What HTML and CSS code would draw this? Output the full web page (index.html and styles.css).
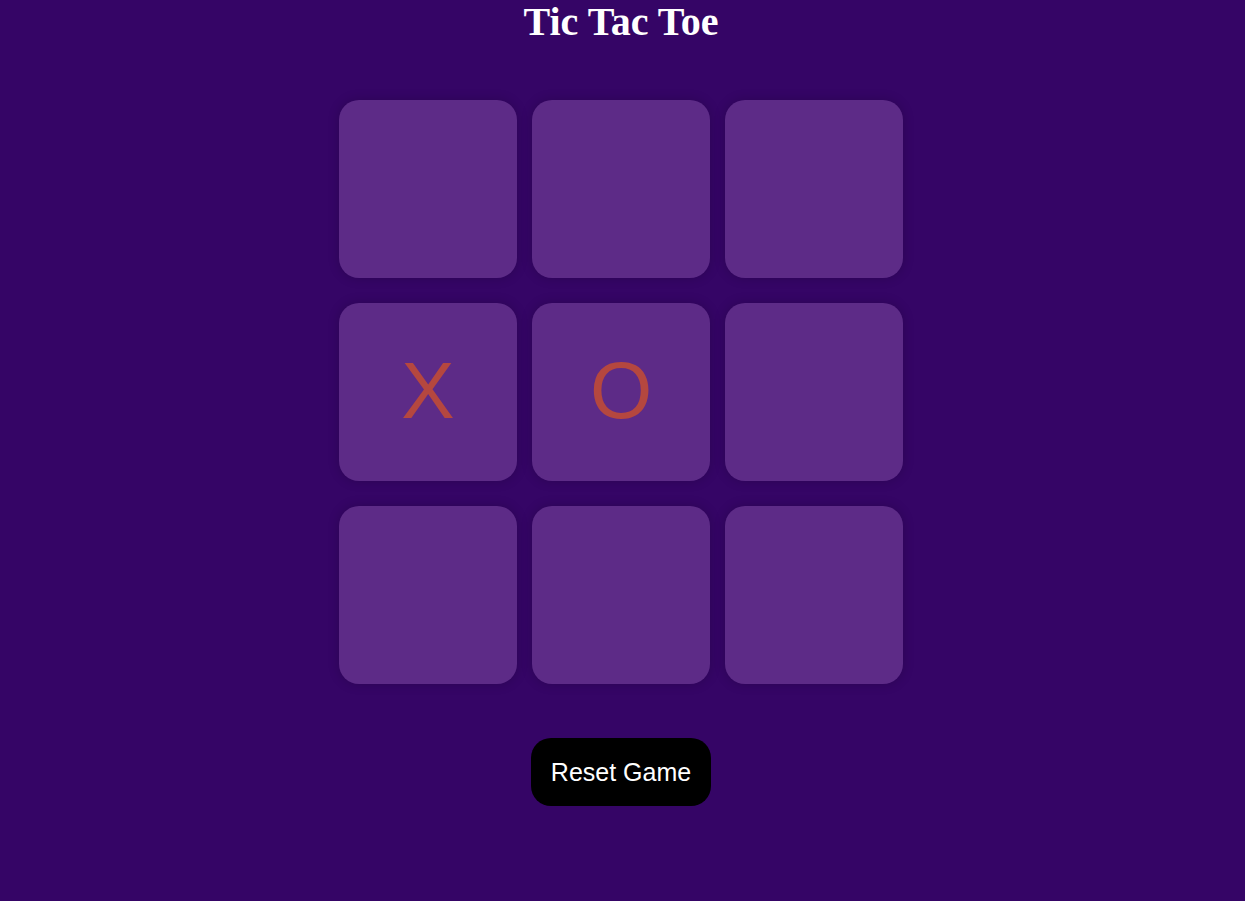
FILE: index.html
```html
<!DOCTYPE html>
<html>
<head>
<meta charset="utf-8">
<link rel="stylesheet" href="styles.css">
</head>
<body>
<main class="page">
  <h1 class="title">Tic Tac Toe</h1>
  <div class="board">
    <div class="cell"></div>
    <div class="cell"></div>
    <div class="cell"></div>
    <div class="cell">X</div>
    <div class="cell">O</div>
    <div class="cell"></div>
    <div class="cell"></div>
    <div class="cell"></div>
    <div class="cell"></div>
  </div>
  <button class="reset">Reset Game</button>
</main>
</body>
</html>
```
FILE: styles.css
```css
html, body {
  margin: 0;
  padding: 0;
  background: #350566;
  height: 100%;
}
.page {
  display: flex;
  flex-direction: column;
  align-items: center;
  padding-right: 3px;
}
.title {
  margin: 0;
  font-family: "Liberation Serif", "Times New Roman", serif;
  font-weight: bold;
  font-size: 40px;
  color: #ffffff;
  line-height: 44px;
}
.board {
  margin-top: 56px;
  display: grid;
  grid-template-columns: repeat(3, 178px);
  grid-auto-rows: 178px;
  column-gap: 15px;
  row-gap: 25px;
}
.cell {
  background: #5d2b87;
  border-radius: 20px;
  box-shadow: 0 0 12px rgba(0, 0, 0, 0.18);
  display: flex;
  align-items: center;
  justify-content: center;
  font-family: "Liberation Sans", Arial, sans-serif;
  font-size: 80px;
  color: #b5473f;
  padding-bottom: 2px;
  box-sizing: border-box;
}
.reset {
  margin-top: 54px;
  width: 180px;
  height: 68px;
  background: #000000;
  color: #ffffff;
  border: none;
  border-radius: 20px;
  font-family: "Liberation Sans", Arial, sans-serif;
  font-size: 25px;
  padding: 0;
}
```
